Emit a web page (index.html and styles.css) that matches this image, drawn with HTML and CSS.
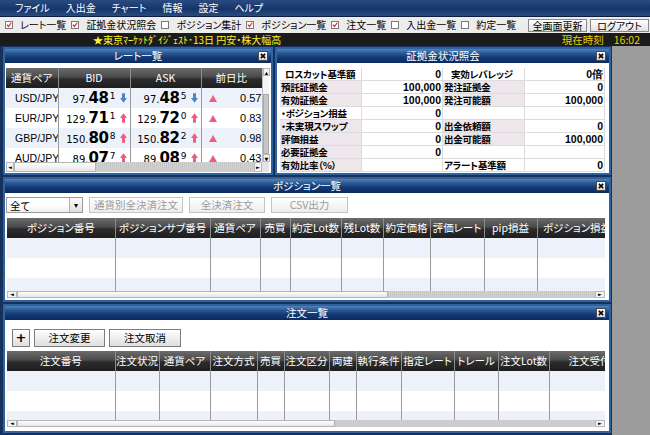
FILE: index.html
```html
<!DOCTYPE html>
<html lang="ja">
<head>
<meta charset="utf-8">
<title>取引画面</title>
<link rel="stylesheet" href="styles.css">
</head>
<body>
<div class="app">
  <nav class="menubar">
    <span>ファイル</span><span>入出金</span><span>チャート</span><span>情報</span><span>設定</span><span>ヘルプ</span>
  </nav>

  <div class="toolbar">
    <span class="chk"><span class="box"><svg viewBox="0 0 8 8"><path d="M1.2 3.6 3.3 6 6.9 1"/></svg></span>レート一覧</span>
    <span class="chk"><span class="box"><svg viewBox="0 0 8 8"><path d="M1.2 3.6 3.3 6 6.9 1"/></svg></span>証拠金状況照会</span>
    <span class="chk"><span class="box"></span>ポジション集計</span>
    <span class="chk"><span class="box"><svg viewBox="0 0 8 8"><path d="M1.2 3.6 3.3 6 6.9 1"/></svg></span>ポジション一覧</span>
    <span class="chk"><span class="box"><svg viewBox="0 0 8 8"><path d="M1.2 3.6 3.3 6 6.9 1"/></svg></span>注文一覧</span>
    <span class="chk"><span class="box"></span>入出金一覧</span>
    <span class="chk"><span class="box"></span>約定一覧</span>
    <span class="tb-btns">
      <button class="tb-btn">全画面更新</button>
      <button class="tb-btn">ログアウト</button>
    </span>
  </div>

  <div class="ticker">
    <span class="news">★東京ﾏｰｹｯﾄﾀﾞｲｼﾞｪｽﾄ･13日 円安・株大幅高</span>
    <span class="clock">現在時刻<span class="time">16:02</span></span>
  </div>

  <div class="workspace">
    <div class="desk">
      <div class="top-row">
        <!-- レート一覧 -->
        <section class="panel rate-panel">
          <header class="ptitle">レート一覧<span class="close"><svg viewBox="0 0 7 7"><path d="M1 1 6 6M6 1 1 6"/></svg></span></header>
          <div class="pbody rate-body">
            <div class="rate-grid">
              <div class="rate-view">
                <table class="grid rate-table">
                  <colgroup><col style="width:52px"><col style="width:72px"><col style="width:71px"><col style="width:74px"></colgroup>
                  <thead><tr><th>通貨ペア</th><th>BID</th><th>ASK</th><th>前日比</th></tr></thead>
                  <tbody>
                    <tr class="alt">
                      <td class="pair">USD/JPY</td>
                      <td class="px"><div class="pxin"><span class="sm">97.</span><span class="big">48</span><span class="sup">1</span><svg class="arr" viewBox="0 0 8 11"><path class="dn" d="M2.3 0h3.4v5.5h2.3L4 11 0 5.5h2.3z"/></svg></div></td>
                      <td class="px"><div class="pxin"><span class="sm">97.</span><span class="big">48</span><span class="sup">5</span><svg class="arr" viewBox="0 0 8 11"><path class="dn" d="M2.3 0h3.4v5.5h2.3L4 11 0 5.5h2.3z"/></svg></div></td>
                      <td class="chg"><div class="chgin"><span class="tri"></span><span class="val">0.57</span></div></td>
                    </tr>
                    <tr>
                      <td class="pair">EUR/JPY</td>
                      <td class="px"><div class="pxin"><span class="sm">129.</span><span class="big">71</span><span class="sup">1</span><svg class="arr" viewBox="0 0 8 11"><path class="up" d="M4 0l4 5.5H5.7V11H2.3V5.5H0z"/></svg></div></td>
                      <td class="px"><div class="pxin"><span class="sm">129.</span><span class="big">72</span><span class="sup">0</span><svg class="arr" viewBox="0 0 8 11"><path class="up" d="M4 0l4 5.5H5.7V11H2.3V5.5H0z"/></svg></div></td>
                      <td class="chg"><div class="chgin"><span class="tri"></span><span class="val">0.83</span></div></td>
                    </tr>
                    <tr class="alt">
                      <td class="pair">GBP/JPY</td>
                      <td class="px"><div class="pxin"><span class="sm">150.</span><span class="big">80</span><span class="sup">8</span><svg class="arr" viewBox="0 0 8 11"><path class="up" d="M4 0l4 5.5H5.7V11H2.3V5.5H0z"/></svg></div></td>
                      <td class="px"><div class="pxin"><span class="sm">150.</span><span class="big">82</span><span class="sup">2</span><svg class="arr" viewBox="0 0 8 11"><path class="up" d="M4 0l4 5.5H5.7V11H2.3V5.5H0z"/></svg></div></td>
                      <td class="chg"><div class="chgin"><span class="tri"></span><span class="val">0.98</span></div></td>
                    </tr>
                    <tr>
                      <td class="pair">AUD/JPY</td>
                      <td class="px"><div class="pxin"><span class="sm">89.</span><span class="big">07</span><span class="sup">7</span><svg class="arr" viewBox="0 0 8 11"><path class="up" d="M4 0l4 5.5H5.7V11H2.3V5.5H0z"/></svg></div></td>
                      <td class="px"><div class="pxin"><span class="sm">89.</span><span class="big">08</span><span class="sup">9</span><svg class="arr" viewBox="0 0 8 11"><path class="up" d="M4 0l4 5.5H5.7V11H2.3V5.5H0z"/></svg></div></td>
                      <td class="chg"><div class="chgin"><span class="tri"></span><span class="val">0.43</span></div></td>
                    </tr>
                  </tbody>
                </table>
              </div>
              <div class="vscroll">
                <span class="sb-btn">▲</span><span class="v-track"></span><span class="v-thumb"></span><span class="sb-btn">▼</span>
              </div>
              <div class="hscroll">
                <span class="sb-btn">◄</span><span class="h-thumb" style="width:82px"></span><span class="h-track"></span><span class="sb-btn">►</span>
              </div>
              <div class="corner"></div>
            </div>
          </div>
        </section>

        <!-- 証拠金状況照会 -->
        <section class="panel margin-panel">
          <header class="ptitle">証拠金状況照会<span class="close"><svg viewBox="0 0 7 7"><path d="M1 1 6 6M6 1 1 6"/></svg></span></header>
          <div class="pbody margin-body">
            <div class="mgrid">
              <div class="lbl plain first">ロスカット基準額</div><div class="v">0</div><div class="lbl plain first2">実効レバレッジ</div><div class="v">0倍</div>
              <div class="lbl">預託証拠金</div><div class="v">100,000</div><div class="lbl">発注証拠金</div><div class="v">0</div>
              <div class="lbl">有効証拠金</div><div class="v">100,000</div><div class="lbl">発注可能額</div><div class="v">100,000</div>
              <div class="lbl plain">・ポジション損益</div><div class="v">0</div><div class="lbl plain"></div><div class="v"></div>
              <div class="lbl">・未実現スワップ</div><div class="v">0</div><div class="lbl">出金依頼額</div><div class="v">0</div>
              <div class="lbl">評価損益</div><div class="v">0</div><div class="lbl">出金可能額</div><div class="v">100,000</div>
              <div class="lbl">必要証拠金</div><div class="v">0</div><div class="lbl plain"></div><div class="v"></div>
              <div class="lbl">有効比率（%）</div><div class="v"></div><div class="lbl plain">アラート基準額</div><div class="v">0</div>
            </div>
          </div>
        </section>
      </div>

      <!-- ポジション一覧 -->
      <section class="panel pos-panel">
        <header class="ptitle">ポジション一覧<span class="close"><svg viewBox="0 0 7 7"><path d="M1 1 6 6M6 1 1 6"/></svg></span></header>
        <div class="pbody list-body">
          <div class="list-tools pos-tools">
            <span class="select">全て<span class="sel-btn">▾</span></span>
            <button class="dis-btn w94">通貨別全決済注文</button>
            <button class="dis-btn w76">全決済注文</button>
            <button class="dis-btn w77">CSV出力</button>
          </div>
          <div class="list-view pos-view">
            <table class="grid list-table">
              <colgroup>
                <col style="width:108px"><col style="width:95px"><col style="width:50px"><col style="width:30px"><col style="width:51px"><col style="width:42px"><col style="width:47px"><col style="width:54px"><col style="width:53px"><col style="width:80px">
              </colgroup>
              <thead><tr><th>ポジション番号</th><th>ポジションサブ番号</th><th>通貨ペア</th><th>売買</th><th>約定Lot数</th><th>残Lot数</th><th>約定価格</th><th>評価レート</th><th>pip損益</th><th>ポジション損益</th></tr></thead>
              <tbody>
                <tr class="alt"><td></td><td></td><td></td><td></td><td></td><td></td><td></td><td></td><td></td><td></td></tr>
                <tr><td></td><td></td><td></td><td></td><td></td><td></td><td></td><td></td><td></td><td></td></tr>
                <tr class="alt"><td></td><td></td><td></td><td></td><td></td><td></td><td></td><td></td><td></td><td></td></tr>
              </tbody>
            </table>
          </div>
          <div class="hscroll wide">
            <span class="sb-btn">◄</span><span class="h-thumb" style="width:371px"></span><span class="h-track"></span><span class="sb-btn">►</span>
          </div>
        </div>
      </section>

      <!-- 注文一覧 -->
      <section class="panel order-panel">
        <header class="ptitle">注文一覧<span class="close"><svg viewBox="0 0 7 7"><path d="M1 1 6 6M6 1 1 6"/></svg></span></header>
        <div class="pbody list-body order-body">
          <div class="list-tools order-tools">
            <button class="act-btn plus">+</button>
            <button class="act-btn w71">注文変更</button>
            <button class="act-btn w72">注文取消</button>
          </div>
          <div class="list-view order-view">
            <table class="grid list-table">
              <colgroup>
                <col style="width:108px"><col style="width:44px"><col style="width:51px"><col style="width:47px"><col style="width:27px"><col style="width:45px"><col style="width:27px"><col style="width:45px"><col style="width:53px"><col style="width:44px"><col style="width:51px"><col style="width:102px">
              </colgroup>
              <thead><tr><th>注文番号</th><th>注文状況</th><th>通貨ペア</th><th>注文方式</th><th>売買</th><th>注文区分</th><th>両建</th><th>執行条件</th><th>指定レート</th><th>トレール</th><th>注文Lot数</th><th>注文受付日時</th></tr></thead>
              <tbody>
                <tr class="alt"><td></td><td></td><td></td><td></td><td></td><td></td><td></td><td></td><td></td><td></td><td></td><td></td></tr>
                <tr><td></td><td></td><td></td><td></td><td></td><td></td><td></td><td></td><td></td><td></td><td></td><td></td></tr>
                <tr class="alt"><td></td><td></td><td></td><td></td><td></td><td></td><td></td><td></td><td></td><td></td><td></td><td></td></tr>
              </tbody>
            </table>
          </div>
          <div class="hscroll wide">
            <span class="sb-btn">◄</span><span class="h-thumb" style="width:318px"></span><span class="h-track"></span><span class="sb-btn">►</span>
          </div>
        </div>
      </section>
    </div>
    <div class="backdrop"></div>
  </div>
</div>
</body>
</html>
```

FILE: styles.css
```css
* { box-sizing: border-box; margin: 0; padding: 0; }

html, body { width: 650px; height: 435px; overflow: hidden; }

body {
  font-family: "Noto Sans CJK JP", "Noto Sans", sans-serif;
  font-feature-settings: "palt";
  font-size: 10px;
  color: #000;
  background: #9c9c9c;
}

.app { display: flex; flex-direction: column; height: 435px; }

/* ---------- menu ---------- */
.menubar {
  height: 17px;
  flex: none;
  display: flex;
  align-items: center;
  gap: 16px;
  padding-left: 15px;
  background: linear-gradient(#2a4c80, #17356a 55%, #284b7e);
  border-bottom: 1px solid #0c1f40;
  color: #fff;
  font-size: 10px;
  line-height: 16px;
}

/* ---------- checkbox toolbar ---------- */
.toolbar {
  height: 16px;
  flex: none;
  display: flex;
  align-items: center;
  padding-left: 5px;
  background: #ececec;
  font-size: 10px;
  line-height: 14px;
  white-space: nowrap;
}
.chk { display: flex; align-items: center; gap: 7px; margin-right: 5px; }
.box {
  width: 8px; height: 8px;
  border: 1px solid #7a7a7a;
  background: #fff;
  display: flex;
}
.box svg { width: 6px; height: 6px; }
.box path { fill: none; stroke: #e0242c; stroke-width: 1.6; }

.tb-btns { margin-left: auto; display: flex; gap: 3px; padding-right: 1px; }
.tb-btn {
  width: 59px; height: 13px;
  border: 1px solid #8a8a8a;
  background: linear-gradient(#ffffff, #e2e2e2);
  font: inherit;
  font-size: 10px;
  line-height: 11px;
  color: #000;
}

/* ---------- ticker ---------- */
.ticker {
  height: 13px;
  flex: none;
  display: flex;
  align-items: center;
  background: #1b1b1b;
  font-size: 10px;
  line-height: 13px;
  white-space: nowrap;
}
.news { margin-left: 93px; color: #fbf52a; }
.clock { margin-left: auto; margin-right: 10px; color: #e2d20a; font-size: 10.5px; }
.time { margin-left: 10px; }

/* ---------- workspace ---------- */
.workspace { flex: 1; display: flex; min-height: 0; }
.desk {
  width: 612px;
  flex: none;
  display: flex;
  flex-direction: column;
  gap: 2px;
  padding: 1px 1px 2px 3px;
  background: #17315c;
}
.backdrop { flex: 1; background: #9c9c9c; }

.top-row { height: 128px; flex: none; display: flex; gap: 2px; }

.panel {
  display: flex;
  flex-direction: column;
  border: 2px solid #2e63a0;
  background: #fff;
  overflow: hidden;
}
.rate-panel { width: 270px; }
.margin-panel { width: 336px; }
.pos-panel { height: 125px; flex: none; }
.order-panel { height: 129px; flex: none; }

.ptitle {
  height: 14px;
  flex: none;
  position: relative;
  text-align: center;
  color: #fff;
  font-size: 10.5px;
  line-height: 14px;
  font-weight: normal;
  background: linear-gradient(#5382b9 0%, #2a5893 30%, #123a75 60%, #0a2a60 100%);
}
.close {
  position: absolute;
  right: 3px; top: 2px;
  width: 10px; height: 10px;
  background: linear-gradient(#ffffff, #d6d6d6);
  border: 1px solid #4a4a4a;
  display: flex;
  align-items: center;
  justify-content: center;
}
.close svg { width: 6px; height: 6px; }
.close path { stroke: #000; stroke-width: 1.8; }

.pbody { flex: 1; min-height: 0; display: flex; flex-direction: column; }

/* ---------- grids ---------- */
.grid {
  border-collapse: collapse;
  table-layout: fixed;
}
.grid th {
  height: 20px;
  padding: 0;
  color: #fff;
  font-weight: normal;
  font-size: 10.5px;
  line-height: 20px;
  white-space: nowrap;
  overflow: hidden;
  text-align: center;
  background: linear-gradient(#6b6b6b 0%, #4a4a4a 45%, #2c2c2c 55%, #1e1e1e 100%);
  border-right: 1px solid #8c8c8c;
}
.grid td {
  height: 20px;
  padding: 0;
  white-space: nowrap;
  overflow: hidden;
  border-right: 1px solid #9a9a9a;
  background: #fff;
}
.grid tr.alt td { background: #edf2fa; }

/* rate */
.rate-body { padding: 5px 2px 1px 1px; }
.rate-grid {
  flex: 1;
  display: grid;
  grid-template-columns: 1fr 7px;
  grid-template-rows: 1fr 10px;
  min-height: 0;
}
.rate-view { overflow: hidden; min-width: 0; }
.rate-table { width: 269px; }
.rate-table th:last-child { padding-left: 14px; text-align: left; }
.pair { padding-left: 9px !important; font-family: "Liberation Sans", sans-serif; font-size: 10.5px; line-height: 20px; }
.pxin {
  height: 20px;
  display: flex;
  justify-content: flex-end;
  align-items: baseline;
  padding-right: 3px;
  line-height: 20px;
  overflow: hidden;
}
.sm { font-family: "DejaVu Sans", sans-serif; font-size: 10px; }
.big { font-family: "DejaVu Sans", sans-serif; font-weight: bold; font-size: 15px; letter-spacing: -0.3px; }
.sup { align-self: flex-start; font-family: "DejaVu Sans", sans-serif; font-size: 9px; line-height: 12px; margin-top: 2px; margin-left: 1px; }
.arr { align-self: center; flex: none; width: 7px; height: 10px; margin-left: 4px; }
.dn { fill: #4d84c6; }
.up { fill: #ef5c7e; }
.chgin {
  height: 20px;
  display: flex;
  align-items: center;
  padding-left: 7px;
  overflow: hidden;
}
.tri {
  flex: none;
  width: 0; height: 0;
  border-left: 4px solid transparent;
  border-right: 4px solid transparent;
  border-bottom: 7px solid #ef5c7e;
}
.val { flex: none; width: 45px; text-align: right; font-family: "Liberation Sans", sans-serif; font-size: 11px; line-height: 20px; }

.vscroll {
  display: flex;
  flex-direction: column;
  background: #ececec;
  border-left: 1px solid #bbb;
}
.sb-btn {
  flex: none;
  width: 7px; height: 8px;
  font-size: 5px;
  line-height: 8px;
  text-align: center;
  color: #000;
  background: #f4f4f4;
  border: 1px solid #b8b8b8;
  font-family: "DejaVu Sans", sans-serif;
  overflow: hidden;
}
.v-track { height: 18px; flex: none; background: #f4f4f4; }
.v-thumb { flex: 1; background: #c6c6c6; border: 1px solid #aaa; }

.hscroll {
  display: flex;
  align-items: stretch;
  background: #c9c9c9;
  height: 10px;
}
.hscroll .sb-btn { width: 8px; height: auto; line-height: 8px; }
.h-thumb { flex: none; background: linear-gradient(#fdfdfd, #e6e6e6); border: 1px solid #b4b4b4; }
.h-track { flex: 1; background: repeating-linear-gradient(90deg, #c6c6c6 0 1px, #d2d2d2 1px 2px); }
.corner { background: #e4e4e4; }

/* margin */
.margin-body { padding: 5px 4px 3px 3px; }
.mgrid {
  flex: 1;
  display: grid;
  grid-template-columns: 82px 81px 82px 1fr;
  grid-template-rows: repeat(8, 1fr);
  font-weight: bold;
  font-size: 9.5px;
  line-height: 12px;
  letter-spacing: -0.2px;
  white-space: nowrap;
}
.mgrid > div {
  display: flex;
  align-items: center;
  overflow: hidden;
  border-right: 1px solid #dcdcdc;
  border-bottom: 1px solid #dcdcdc;
}
.lbl { background: #ede6ea; padding-left: 1px; }
.lbl.plain { background: #fff; }
.lbl.first { padding-left: 5px; }
.lbl.first2 { padding-left: 8px; }
.v { justify-content: flex-end; padding-right: 1px; font-family: "Liberation Sans", sans-serif; font-size: 10.5px; letter-spacing: 0; }

/* lists */
.list-body { padding: 4px 4px 2px 2px; }
.order-body { padding: 9px 4px 4px 2px; }
.list-tools { flex: none; display: flex; align-items: center; }
.pos-tools { height: 16px; margin-bottom: 5px; gap: 6px; margin-left: -1px; }
.order-tools { height: 18px; margin-bottom: 4px; padding-left: 5px; gap: 4px; }

.select {
  width: 77px; height: 16px;
  display: flex;
  align-items: center;
  padding-left: 3px;
  border: 1px solid #9a9a9a;
  background: linear-gradient(#ffffff 50%, #eeeeee);
  font-size: 10.5px;
}
.sel-btn {
  margin-left: auto;
  width: 13px; height: 14px;
  border-left: 1px solid #b0b0b0;
  background: linear-gradient(#fafafa, #e0e0e0);
  font-size: 8px;
  line-height: 14px;
  text-align: center;
}
.dis-btn {
  height: 16px;
  border: 1px solid #c4c4c4;
  background: linear-gradient(#ffffff, #ececec);
  color: #9c9c9c;
  font: inherit;
  font-size: 10.5px;
  line-height: 14px;
}
.w94 { width: 94px; }
.w76 { width: 76px; }
.w77 { width: 77px; }

.act-btn {
  height: 18px;
  border: 1px solid #7c7c7c;
  background: linear-gradient(#ffffff, #dedede);
  color: #000;
  font: inherit;
  font-size: 10.5px;
  line-height: 16px;
}
.act-btn.plus { width: 18px; font-family: "DejaVu Sans", sans-serif; font-size: 13px; font-weight: bold; line-height: 14px; }
.w71 { width: 71px; }
.w72 { width: 72px; }

.list-view { flex: 1; min-height: 0; overflow: hidden; }
.list-table { width: max-content; }
.hscroll.wide { height: 7px; flex: none; }
.hscroll.wide .sb-btn { width: 10px; font-size: 5px; line-height: 5px; }
```
